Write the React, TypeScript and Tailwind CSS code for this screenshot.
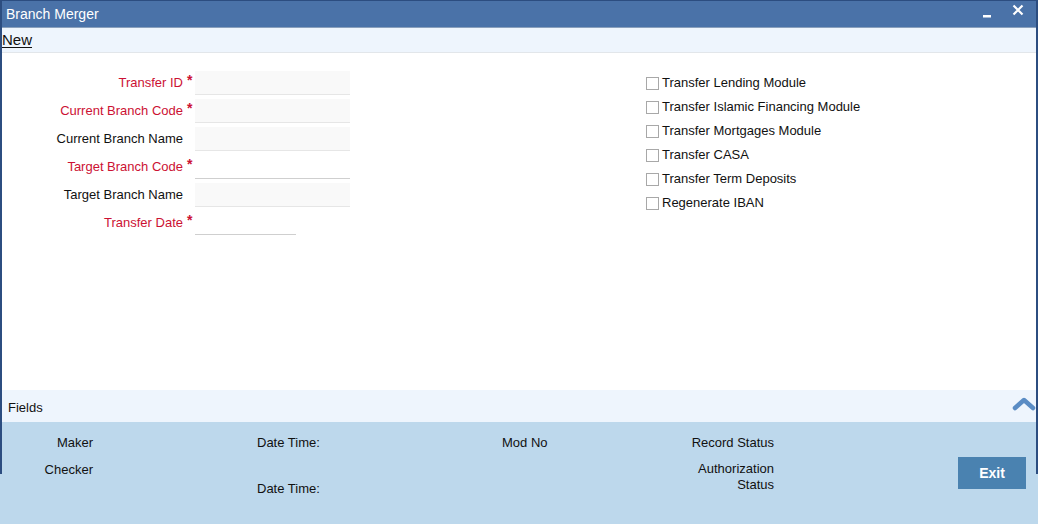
const font = { fontFamily: '"Liberation Sans", Arial, sans-serif' };

type Field = { label: string; required: boolean; variant: 'ro' | 'edit' | 'date' };

const fields: Field[] = [
  { label: 'Transfer ID', required: true, variant: 'ro' },
  { label: 'Current Branch Code', required: true, variant: 'ro' },
  { label: 'Current Branch Name', required: false, variant: 'ro' },
  { label: 'Target Branch Code', required: true, variant: 'edit' },
  { label: 'Target Branch Name', required: false, variant: 'ro' },
  { label: 'Transfer Date', required: true, variant: 'date' },
];

const options = [
  'Transfer Lending Module',
  'Transfer Islamic Financing Module',
  'Transfer Mortgages Module',
  'Transfer CASA',
  'Transfer Term Deposits',
  'Regenerate IBAN',
];

const FieldRow = ({ field }: { field: Field }) => (
  <div className="flex items-center h-[28px]">
    <div className="w-[183px] shrink-0 flex justify-end">
      <span className={`text-[13px] whitespace-nowrap ${field.required ? 'text-[#cc1133]' : 'text-[#111]'}`}>{field.label}</span>
    </div>
    <span className="w-[12px] shrink-0 self-start pt-[4px] pl-[4px] text-[14px] font-bold text-[#cc1133] leading-none">
      {field.required ? '*' : ''}
    </span>
    {field.variant === 'ro' && (
      <div className="w-[155px] h-[24px] bg-[#f9f9f9] border-b border-[#e6e6e6]" />
    )}
    {field.variant === 'edit' && (
      <div className="w-[155px] h-[24px] bg-white border-b border-[#cfcfcf]" />
    )}
    {field.variant === 'date' && (
      <div className="w-[101px] h-[24px] bg-white border-b border-[#cfcfcf]" />
    )}
  </div>
);

export default function App() {
  return (
    <div className="relative w-[1038px] h-[524px] bg-white overflow-hidden text-[#111]" style={font}>
      {/* window frame */}
      <div className="absolute left-0 top-0 w-[2px] h-[474px] bg-[#2c4d80]" />
      <div className="absolute right-0 top-0 w-[2px] h-[474px] bg-[#2c4d80]" />

      <div className="flex flex-col h-full">
        <div className="h-[28px] shrink-0 bg-[#4a72a8] border-t border-[#2c4d80] border-b border-b-[#8aa0bc] flex items-center justify-between pl-[6px] pr-[14px]">
          <span className="text-white text-[14px]">Branch Merger</span>
          <div className="flex items-center gap-[20px]">
            <svg width="10" height="10" viewBox="0 0 10 10">
              <rect x="1" y="6" width="8" height="2.5" fill="white" />
            </svg>
            <svg width="12" height="12" viewBox="0 0 12 12" className="-mt-[8px]">
              <path d="M1.5 1.5 L10.5 10.5 M10.5 1.5 L1.5 10.5" stroke="white" strokeWidth="2.2" />
            </svg>
          </div>
        </div>

        <div className="h-[25px] shrink-0 bg-[#eef5fd] border-b border-[#e2e6ea] flex items-center pl-[2px]">
          <span className="text-[15px] underline underline-offset-2">New</span>
        </div>

        <div className="flex-1 flex pt-[16px]">
          <div className="w-[646px] shrink-0 flex flex-col">
            {fields.map((f) => (
              <FieldRow key={f.label} field={f} />
            ))}
          </div>
          <div className="flex flex-col pt-[2px]">
            {options.map((o) => (
              <label key={o} className="flex items-center h-[24px]">
                <span className="w-[13px] h-[13px] border border-[#a8a8a8] bg-white mr-[3px]" />
                <span className="text-[13px] whitespace-nowrap">{o}</span>
              </label>
            ))}
          </div>
        </div>

        <div className="h-[32px] shrink-0 bg-[#eef5fd] flex items-center justify-between pl-[8px] pr-[2px]">
          <span className="text-[13px] mt-[3px]">Fields</span>
          <svg width="24" height="16" viewBox="0 0 24 16" className="-mt-[6px]">
            <path d="M3 13 L12 5 L21 13" fill="none" stroke="#5a8cc4" strokeWidth="4.5" strokeLinecap="round" strokeLinejoin="round" />
          </svg>
        </div>

        <div className="h-[102px] shrink-0 bg-[#bdd8ec] flex text-[13px] pt-[11px] whitespace-nowrap">
          <div className="w-[93px] shrink-0 flex flex-col items-end">
            <span className="h-[27px]">Maker</span>
            <span>Checker</span>
          </div>
          <div className="w-[409px] shrink-0 flex flex-col pl-[164px]">
            <span className="h-[46px]">Date Time:</span>
            <span>Date Time:</span>
          </div>
          <div className="w-[151px] shrink-0 flex flex-col">
            <span>Mod No</span>
          </div>
          <div className="w-[121px] shrink-0 flex flex-col items-end text-right">
            <span className="h-[28px]">Record Status</span>
            <span className="leading-[16px]">Authorization<br />Status</span>
          </div>
          <div className="shrink-0 pl-[184px] pt-[24px]">
            <button className="w-[68px] h-[32px] bg-[#4a82b0] text-white font-bold text-[14px]">Exit</button>
          </div>
        </div>
      </div>
    </div>
  );
}
